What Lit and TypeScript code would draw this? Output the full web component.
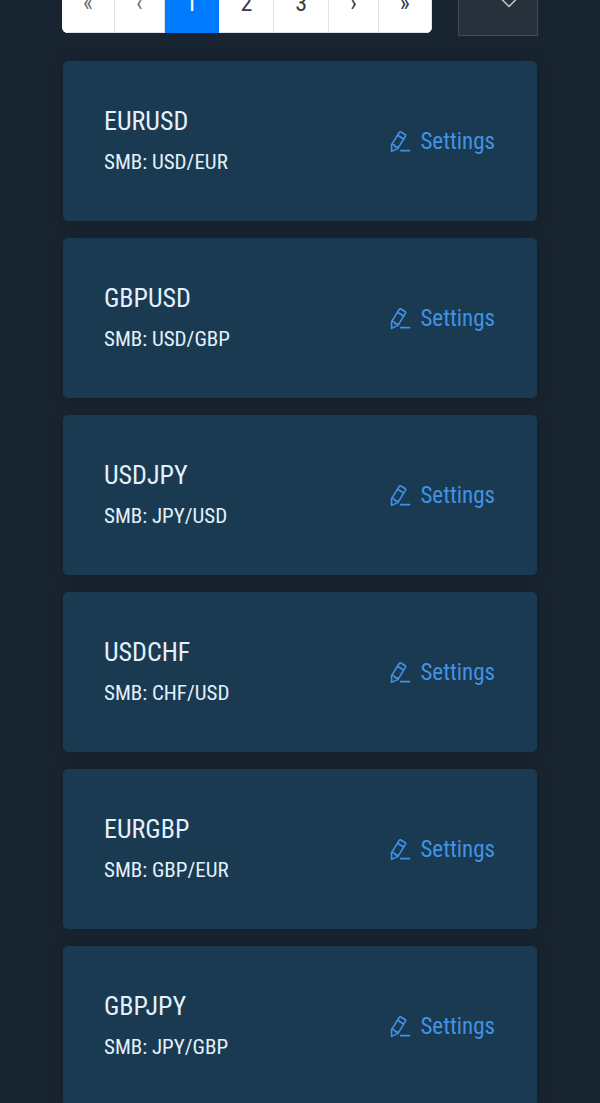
import { LitElement, html, css } from "lit";
import { customElement, property, state } from "lit/decorators.js";
import { classMap } from "lit/directives/class-map.js";

@customElement("pair-card")
class PairCard extends LitElement {
  @property() name = "";
  @property() symbol = "";

  static styles = css`
    :host {
      display: block;
    }
    .card {
      box-sizing: border-box;
      display: flex;
      align-items: center;
      justify-content: space-between;
      min-height: 160px;
      padding: 26px 42px 24px 41px;
      border-radius: 5px;
      background: #1a3a52;
      box-shadow: 0 0 12px rgba(20, 28, 44, 0.5);
    }
    .name {
      margin: 0;
      font-size: 26px;
      line-height: 40px;
      font-weight: 400;
      color: #e3f1fd;
    }
    .symbol {
      margin: 0;
      font-size: 21px;
      line-height: 42px;
      color: #e3f1fd;
    }
    .settings {
      display: flex;
      align-items: center;
      gap: 8px;
      padding: 0;
      border: 0;
      background: none;
      font: inherit;
      font-size: 23px;
      line-height: 32px;
      color: #4192e4;
      cursor: pointer;
    }
    .icon {
      width: 22px;
      height: 24px;
      fill: none;
      stroke: currentColor;
      stroke-width: 1.6;
      stroke-linejoin: round;
      stroke-linecap: round;
    }
  `;

  render() {
    return html`
      <article class="card">
        <div>
          <h2 class="name">${this.name}</h2>
          <p class="symbol">SMB: ${this.symbol}</p>
        </div>
        <button class="settings" type="button">
          <svg class="icon" viewBox="0 0 22 24" aria-hidden="true">
            <path d="M10.4 1.8 L15.4 4.8 Q16 5.2 15.6 5.9 L8 18.4 L1.6 21.4 L1.6 14.6 L9.4 2.2 Q9.8 1.5 10.4 1.8Z" />
            <path d="M7.6 5.2 L13.6 9 M1.6 14.6 Q4.9 14 4.9 16.7 Q7.4 16.1 8 18.4 M10.6 20.6 H19.6" />
          </svg>
          <span>Settings</span>
        </button>
      </article>
    `;
  }
}

@customElement("app-root")
class AppRoot extends LitElement {
  @state() private page = 1;

  private pairs = [
    ["EURUSD", "USD/EUR"],
    ["GBPUSD", "USD/GBP"],
    ["USDJPY", "JPY/USD"],
    ["USDCHF", "CHF/USD"],
    ["EURGBP", "GBP/EUR"],
    ["GBPJPY", "JPY/GBP"],
  ];

  static styles = css`
    :host {
      display: block;
      box-sizing: border-box;
      height: 100vh;
      overflow-y: auto;
      scrollbar-width: none;
      padding: 0 63px;
      background: #18242f;
      font-family: "Roboto Condensed", Roboto, sans-serif;
    }
    .toolbar {
      display: flex;
      align-items: flex-start;
      justify-content: space-between;
      margin: -27px -1px 25px;
    }
    .pages {
      display: flex;
      overflow: hidden;
      border-radius: 6px;
      background: #fff;
    }
    .page {
      box-sizing: border-box;
      height: 60px;
      padding: 0 21px;
      border: 1px solid #dee2e6;
      border-left-width: 0;
      background: #fff;
      font: inherit;
      font-size: 24px;
      line-height: 58px;
      color: #343c46;
      cursor: pointer;
    }
    .page.muted {
      color: #6c757d;
    }
    .page.active {
      border-color: #007bff;
      background: #007bff;
      color: #fff;
    }
    .size {
      display: grid;
      align-items: center;
      width: 80px;
    }
    .size > * {
      grid-area: 1 / 1;
    }
    .select {
      appearance: none;
      box-sizing: border-box;
      width: 100%;
      height: 63px;
      border: 1px solid #424c56;
      border-radius: 0;
      background: #27313b;
      color: #e3f1fd;
      font: inherit;
      font-size: 24px;
    }
    .chevron {
      justify-self: end;
      width: 16px;
      height: 10px;
      margin: 0 21px 4px 0;
      fill: none;
      stroke: #c3ccd5;
      stroke-width: 1.5;
      pointer-events: none;
    }
    .list {
      display: grid;
      gap: 17px;
    }
  `;

  private go(target: number) {
    this.page = Math.min(3, Math.max(1, target));
  }

  private pageButton(label: string, target: number, muted = false) {
    const active = label === String(this.page);
    return html`<button
      type="button"
      class=${classMap({ page: true, active, muted })}
      @click=${() => this.go(target)}
    >${label}</button>`;
  }

  render() {
    const first = this.page === 1;
    return html`
      <header class="toolbar">
        <nav class="pages" aria-label="Pages">
          ${this.pageButton("«", 1, first)}
          ${this.pageButton("‹", this.page - 1, first)}
          ${[1, 2, 3].map((n) => this.pageButton(String(n), n))}
          ${this.pageButton("›", this.page + 1)}
          ${this.pageButton("»", 3)}
        </nav>
        <label class="size">
          <select class="select" aria-label="Items per page">
            <option></option>
          </select>
          <svg class="chevron" viewBox="0 0 16 10" aria-hidden="true">
            <path d="M1 1.5 L8 8.5 L15 1.5" />
          </svg>
        </label>
      </header>
      <main class="list">
        ${this.pairs.map(
          ([name, symbol]) => html`<pair-card .name=${name} .symbol=${symbol}></pair-card>`
        )}
      </main>
    `;
  }
}
